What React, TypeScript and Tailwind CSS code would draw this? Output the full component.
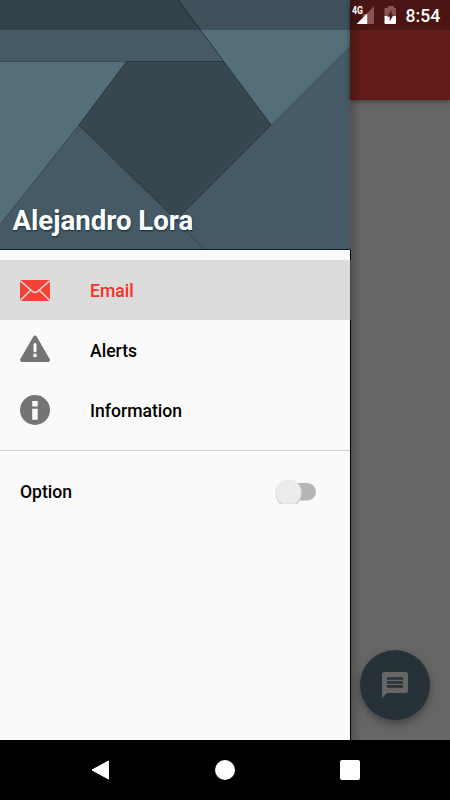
import { useState } from 'react';
import type { ReactNode } from 'react';

const menu = [
    { name: 'Email', icon: <MailIcon /> },
    { name: 'Alerts', icon: <AlertIcon /> },
    { name: 'Information', icon: <InfoIcon /> },
];

function MailIcon() {
    return (
        <svg className="w-[30px] h-[30px]" viewBox="0 0 30 30" fill="none">
            <rect x="0" y="5" width="30" height="21" rx="1.5" fill="#f44336" />
            <path d="M0.3 5.8 12.8 16.7Q15 18.5 17.2 16.7L29.7 5.8M0.3 25.5 10.6 15.2M29.7 25.5 19.4 15.2" stroke="#dcdcdc" strokeWidth="1.5" />
        </svg>
    );
}

function AlertIcon() {
    return (
        <svg className="w-[30px] h-[30px]" viewBox="0 0 30 30" fill="none">
            <path d="M15 2.4 28 25 H2Z" fill="#747474" stroke="#747474" strokeWidth="3.8" strokeLinejoin="round" />
            <path d="M15 9.5V15.7" stroke="#fafafa" strokeWidth="3" strokeLinecap="round" />
            <circle cx="15" cy="20.4" r="1.9" fill="#fafafa" />
        </svg>
    );
}

function InfoIcon() {
    return (
        <svg className="w-[30px] h-[30px]" viewBox="0 0 30 30">
            <circle cx="15" cy="15" r="15" fill="#747474" />
            <path d="M12.2 6h5.5v5.5h-5.5zM12.2 13.7h5.5v11h-5.5z" fill="#fafafa" />
        </svg>
    );
}

function HeaderArt() {
    return (
        <svg className="absolute inset-0" width="350" height="250" viewBox="0 0 350 250" fill="none">
            <rect width="350" height="250" fill="#455a64" />
            <path d="M0 61H127L79 125 0 225Z" fill="#546e7a" />
            <path d="M178 0H350V46L271 125Z" fill="#546e7a" />
            <path d="M127 61H223L271 125 181 215H171L79 125Z" fill="#37474f" />
            <path d="M0 61.5H127" stroke="#3c4f5a" />
            <path d="M127 61.5H223M178 0 271 125 181 215M127 61 79 125 172 216" stroke="#28363d" />
            <path d="M79 125 0 225M172 216 205 250" stroke="#35464f" />
            <path d="M271 125 350 46" stroke="#425761" />
            <path d="M0 249.5H350" stroke="#06202f" />
        </svg>
    );
}

function MenuRow({ name, icon, active, onClick }: { name: string; icon: ReactNode; active: boolean; onClick: () => void }) {
    return (
        <li>
            <button onClick={onClick} className={`flex items-center w-full h-[60px] pl-5 gap-10 text-[17.6px] font-medium ${active ? 'bg-[#dcdcdc] text-[#f9301f]' : 'text-black'}`}>
                {icon}
                <span className="pt-0.5">{name}</span>
            </button>
        </li>
    );
}

function Switch() {
    return (
        <button role="switch" aria-checked="false" aria-label="Option" className="h-7">
            <svg className="block" width="44" height="28" viewBox="0 0 44 28">
                <rect x="9" y="5" width="33" height="17.5" rx="8.75" fill="#b6b6b6" />
                <path d="M1.7 15a13 13 0 0 1 26 0c0 4.5-1.6 8-4.3 11H6C3.3 23 1.7 19.500 1.7 15Z" fill="#d2d2d2" />
                <path d="M2.300 13.700a12.400 12.400 0 0 1 24.800 0c0 5-3 10-6.300 12H8.600C4.300 23.500 2.300 19 2.300 13.700Z" fill="#ececec" />
            </svg>
        </button>
    );
}

function StatusBar() {
    return (
        <div className="absolute inset-x-0 top-0 h-[30px] flex items-center justify-end bg-black/25 text-white">
            <svg className="w-[46px] h-[30px]" viewBox="0 0 46 30">
                <text x="0" y="14" fontSize="10" fontWeight="700" fontFamily="Roboto, sans-serif" textLength="11" lengthAdjust="spacingAndGlyphs" fill="#fff">4G</text>
                <path d="M22 6V24H4.700L11 17.600V14H14.500Z" fill="#885555" />
                <path d="M4.700 24 15.200 13.500V24Z" fill="#fff" />
                <path d="M36 6h6v2h2v8H32.500V8H36Z" fill="#885555" />
                <path d="M32.500 16H44v7a1 1 0 0 1-1 1h-9.500a1 1 0 0 1-1-1Z" fill="#fff" />
                <path d="M39.500 10 35.300 16.800H37.800V21.500L41.500 14.800H39.500Z" fill="#531413" />
            </svg>
            <span className="w-[52px] pl-[7.5px] text-[17.6px] font-medium leading-none pt-1">8:54</span>
        </div>
    );
}

export default function App() {
    const [active, setActive] = useState('Email');

    return (
        <div className="relative flex flex-col w-[450px] h-[800px] overflow-hidden bg-black font-['Roboto',sans-serif]">
            <div className="flex h-[740px]">
                <aside className="w-[350px] bg-[#fafafa]">
                    <header className="relative flex items-end h-[250px] px-[12.5px] pb-[11px]">
                        <HeaderArt />
                        <h1 className="relative text-[27.6px] leading-9 font-bold text-white [text-shadow:0.5px_1px_2px_#082b40]">Alejandro Lora</h1>
                    </header>

                    <ul className="pt-2.5">
                        {menu.map((item) => (
                            <MenuRow key={item.name} name={item.name} icon={item.icon} active={active === item.name} onClick={() => setActive(item.name)} />
                        ))}
                    </ul>

                    <div className="flex items-center justify-between h-[83px] mt-2.5 pl-5 pr-8 border-t border-[#d2d2d2]">
                        <p className="text-[17.6px] font-medium text-black">Option</p>
                        <Switch />
                    </div>
                </aside>

                <main className="relative flex flex-col justify-between w-[100px] bg-[#666]">
                    <div className="h-[100px] bg-[#631c19] shadow-[0_1px_5px_rgba(0,0,0,0.45)]"></div>
                    <button aria-label="Messages" className="flex items-center justify-center w-[70px] h-[70px] ml-2.5 mb-5 rounded-full bg-[#263238] shadow-[0_4px_8px_rgba(0,0,0,0.35)]">
                        <svg className="w-[26px] h-[26px]" viewBox="0 0 26 26">
                            <path d="M2.5 0H23.5A2.5 2.5 0 0 1 26 2.5V18.5A2.5 2.5 0 0 1 23.5 21H5.2L0 26V2.5A2.5 2.5 0 0 1 2.5 0Z" fill="#666" />
                            <path d="M5 5.2h16v2.6H5zM5 9.2h16v2.6H5zM5 13.1h16v2.6H5z" fill="#263238" />
                        </svg>
                    </button>
                    {/* drawer shadow and edge */}
                    <div className="absolute inset-y-0 left-0 w-3 bg-linear-to-r from-black/20 to-transparent"></div>
                    <div className="absolute left-0 top-[250px] bottom-0 w-px bg-black">
                        <div className="mt-2.5 h-[60px] bg-[#444]"></div>
                    </div>
                </main>
            </div>

            <StatusBar />

            <nav className="flex items-center justify-around h-[60px] px-[37px]">
                <button aria-label="Back">
                    <svg className="block" width="20" height="20" viewBox="0 0 20 20"><path d="M18.5 1v18L2 10Z" fill="#fff" stroke="#fff" strokeLinejoin="round" /></svg>
                </button>
                <button aria-label="Home" className="w-5 h-5 rounded-full bg-white"></button>
                <button aria-label="Recent apps" className="w-5 h-5 rounded-xs bg-white"></button>
            </nav>
        </div>
    );
}
